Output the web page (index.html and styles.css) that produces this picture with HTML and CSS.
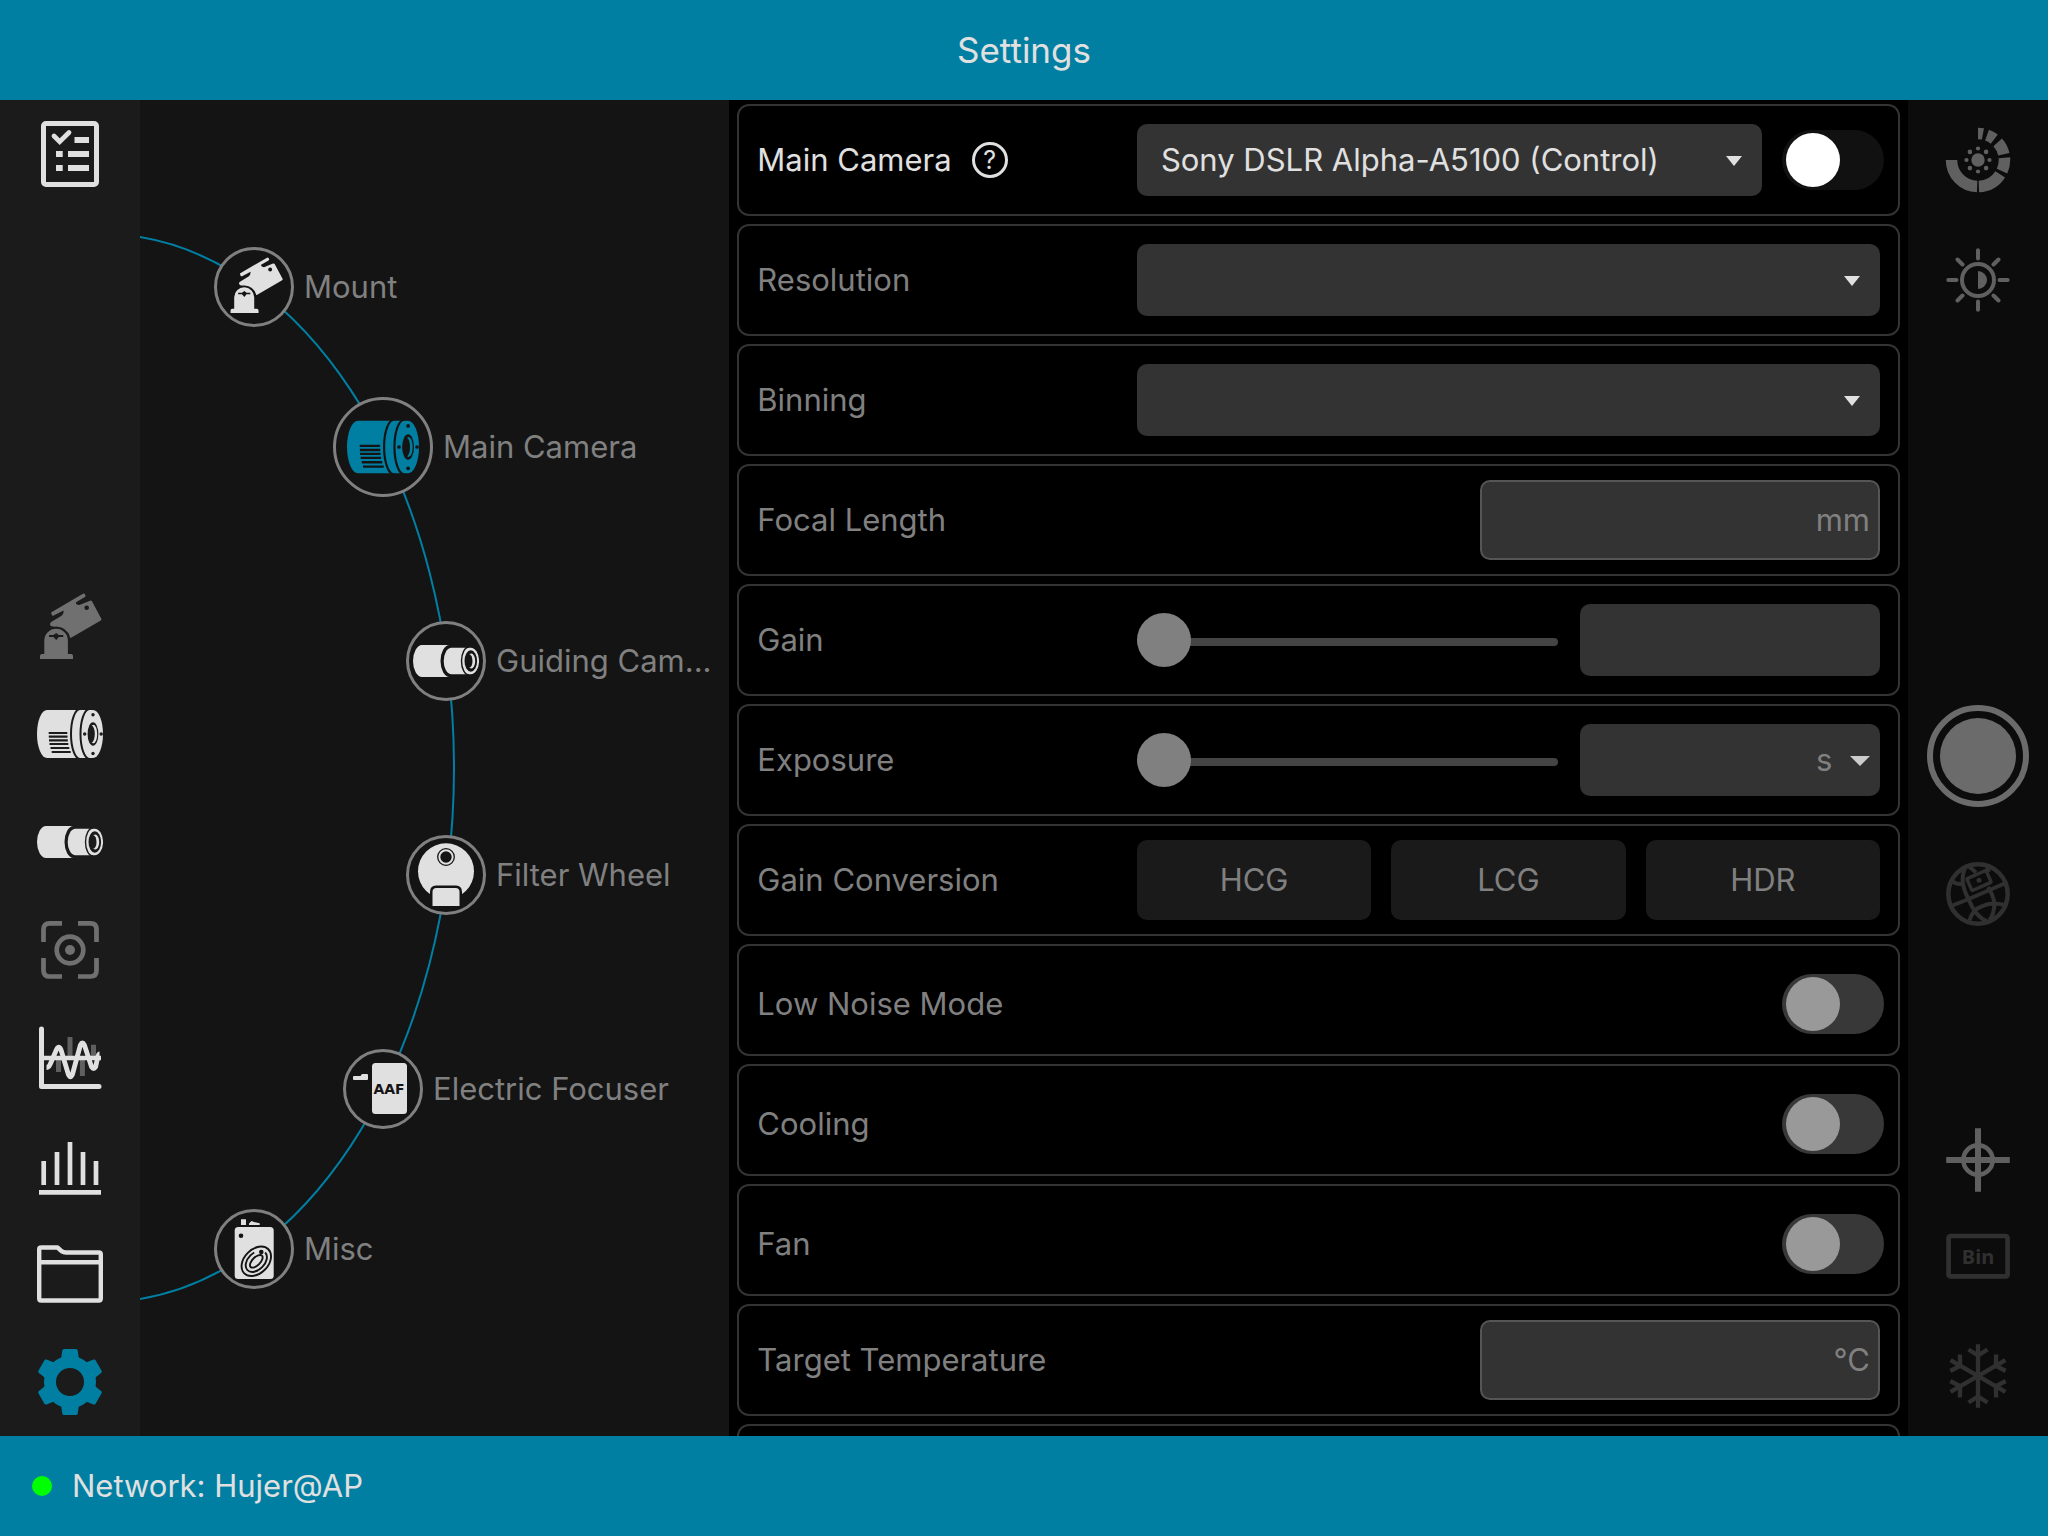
FILE: index.html
```html
<!DOCTYPE html>
<html lang="en">
<head>
  <meta charset="UTF-8">
  <meta name="viewport" content="width=device-width, initial-scale=1">
  <title>Settings</title>
  <link rel="stylesheet" href="styles.css">
</head>
<body>
  <!-- shared device icons -->
  <svg class="sprite" aria-hidden="true">
    <symbol id="i-mount" viewBox="0 0 66 66">
      <path fill="currentColor" d="M14 19.5 46 .8q1.2-.8 1.8.3l.6 1.4q.4 1-.6 1.5L39 9.2q-.6 2.6 3.4 2.8L53 7.7q1.4-.5 2 .6l9.3 17.4q.5 1-.5 1.7L34.5 44.6q-1.2.8-1.4-.4Q30 34.2 19.5 33.6 13.5 34 13 31.4q-.2-1.6 1.6-2.6l9.6-5.8q2.6-1.8 2.4-5.6l-10 5.2q-1.2.6-1.8-.6z"/>
      <circle class="cut" cx="49.7" cy="14.7" r="2.3"/>
      <path fill="currentColor" d="M3 66v-3q0-2 2-2h2.3V47.5a11.8 11.8 0 0 1 23.6 0V61H34q2 0 2 2v3z"/>
      <path class="cut" d="M12 42h4.5l2.7-2 2.7 2h4.4v2h-4.4l-2.7 3-2.7-3H12z"/>
    </symbol>
    <symbol id="i-camera" viewBox="0 0 66 66">
      <path fill="currentColor" d="M10 9H56A10 24 0 0 1 56 57H10A10 24 0 0 1 10 9Z"/>
      <path class="cut-line" stroke-width="2" d="M43 8A9 25 0 0 0 43 58M52.5 8A9 25 0 0 0 52.5 58"/>
      <path class="cut-line" stroke-width="2.2" d="M11.7 32H30.3M11.8 35.7H30.5M12 39.3H30.8M12.5 43H31.3M13.5 47H32.3M14.7 51H33.7"/>
      <g class="cut">
        <circle cx="56" cy="13.7" r="1.7"/>
        <circle cx="56" cy="52.5" r="1.7"/>
        <circle cx="47.7" cy="33" r="1.7"/>
        <circle cx="64.2" cy="33" r="1.7"/>
        <ellipse cx="56" cy="33" rx="5.4" ry="11.8"/>
      </g>
      <ellipse fill="currentColor" cx="56.4" cy="33" rx="3.8" ry="9.2"/>
      <ellipse class="cut" cx="54.4" cy="33" rx="3.4" ry="8.6"/>
    </symbol>
    <symbol id="i-guide" viewBox="0 0 66 66">
      <path fill="currentColor" d="M9 17H36.5A9 16 0 0 0 36.5 49H9A9 16 0 0 1 9 17Z"/>
      <path fill="currentColor" d="M38 19.7H57.7A8.3 13.2 0 0 1 57.7 46.2H38A8 13.3 0 0 1 38 19.7Z"/>
      <path class="cut-line" stroke-width="1.4" d="M56 19A7.5 14 0 0 0 56 47"/>
      <ellipse class="cut" cx="57.8" cy="33" rx="6.3" ry="10.7"/>
      <ellipse fill="currentColor" cx="58.2" cy="33" rx="4" ry="7.4"/>
      <ellipse class="cut" cx="56.2" cy="33" rx="3.3" ry="6.8"/>
    </symbol>
  </svg>

  <header class="topbar">
    <h1>Settings</h1>
  </header>

  <main class="layout">
    <nav class="sidebar" aria-label="Tools">
      <button class="tool tool-first" aria-label="Plan">
        <svg viewBox="0 0 66 66" fill="none" stroke="currentColor">
          <rect x="6.5" y="2.5" width="53" height="61" rx="2.5" stroke-width="5"/>
          <path d="M17 15l5.700 5.700L32 11.500" stroke-width="4.8" stroke-linecap="round"/>
          <path d="M37.5 19H52M31 33H52M31 47H52M19 33h6.700M19 47h6.700" stroke-width="6"/>
        </svg>
      </button>
      <button class="tool off" aria-label="Mount"><svg><use href="#i-mount"/></svg></button>
      <button class="tool" aria-label="Main Camera"><svg><use href="#i-camera"/></svg></button>
      <button class="tool" aria-label="Guiding Camera"><svg><use href="#i-guide"/></svg></button>
      <button class="tool off" aria-label="Focus">
        <svg viewBox="0 0 66 66" fill="none" stroke="currentColor" stroke-width="4.7">
          <path d="M25 6.4H12.5q-6 0-6 6V25M41 6.4H53.5q6 0 6 6V25M25 59.5H12.5q-6 0-6-6V41M41 59.5H53.5q6 0 6-6V41"/>
          <circle cx="33" cy="33" r="13.3"/>
          <circle cx="33" cy="33" r="5" fill="currentColor" stroke="none"/>
        </svg>
      </button>
      <button class="tool" aria-label="Guiding">
        <svg viewBox="0 0 66 66" fill="none" stroke="currentColor">
          <path stroke="#5f5f5f" stroke-width="5" d="M21.5 33V47M33 12V33M45.4 33V51M56.5 19.7V33"/>
          <path d="M4.5 4V61.500H62" stroke-width="5" stroke-linecap="round" stroke-linejoin="round"/>
          <path d="M7 33H64" stroke-width="4.5"/>
          <path d="M9.500 42.500q2.500 0 4-4l6-14q2.200-4.500 4.400 0l7.500 25q2 4.500 4 0l8-29.500q2-4 4 0l7.200 22q2 3 4 0l1.500-7q1-6 2.400-6" stroke-width="4.8" stroke-linejoin="round"/>
        </svg>
      </button>
      <button class="tool" aria-label="Histogram">
        <svg viewBox="0 0 66 66" fill="none" stroke="currentColor" stroke-width="4.7">
          <path d="M6.7 28V52M20 19V52M33 9V52M46 19V52M59 28V52M2 59.3H64"/>
        </svg>
      </button>
      <button class="tool" aria-label="Files">
        <svg viewBox="0 0 66 66" fill="none" stroke="currentColor" stroke-width="4.4" stroke-linejoin="round">
          <path d="M4 6.5H20.5l4 3.600q2 1.400 4.500 1.400H61.800q2 0 2 2V57.500q0 2-2 2H4.200q-2 0-2-2V8.500q0-2 2-2zM2 21.300H64"/>
        </svg>
      </button>
      <button class="tool active" aria-label="Settings">
        <svg viewBox="0 0 66 66" fill="currentColor">
          <circle cx="33" cy="33" r="20" fill="none" stroke="currentColor" stroke-width="12"/>
          <g id="tooth"><path d="M27 0H39q1.500 0 1.700 1.500L42 10H24L25.300 1.500Q25.500 0 27 0Z"/></g>
          <use href="#tooth" transform="rotate(60 33 33)"/>
          <use href="#tooth" transform="rotate(120 33 33)"/>
          <use href="#tooth" transform="rotate(180 33 33)"/>
          <use href="#tooth" transform="rotate(240 33 33)"/>
          <use href="#tooth" transform="rotate(300 33 33)"/>
        </svg>
      </button>
    </nav>

    <section class="devices" aria-label="Devices">
      <div class="wheel">
        <svg class="arc" viewBox="0 0 589 1336" fill="none">
          <ellipse cx="-38" cy="668" rx="352" ry="534"/>
        </svg>
        <a href="#" class="node n-mount"><span class="disc"><svg class="small"><use href="#i-mount"/></svg></span><span class="name">Mount</span></a>
        <a href="#" class="node n-camera"><span class="disc big"><svg><use href="#i-camera"/></svg></span><span class="name">Main Camera</span></a>
        <a href="#" class="node n-guide"><span class="disc"><svg><use href="#i-guide"/></svg></span><span class="name">Guiding Cam...</span></a>
        <a href="#" class="node n-filter">
          <span class="disc">
            <svg viewBox="0 0 66 66">
              <circle cx="33" cy="29.3" r="28" fill="currentColor"/>
              <circle class="cut-line" cx="33" cy="15" r="8.3" stroke-width="1.3"/>
              <circle class="cut" cx="33" cy="15" r="5.7"/>
              <path class="cut" d="M17 66V50q0-6.500 6-6.500H43q6 0 6 6.500v16z"/>
              <path fill="currentColor" d="M19.5 64V50q0-4 4-4h19q4 0 4 4v14z"/>
            </svg>
          </span>
          <span class="name">Filter Wheel</span>
        </a>
        <a href="#" class="node n-focuser">
          <span class="disc">
            <svg viewBox="0 0 66 66" fill="currentColor">
              <path d="M3 21q0-1 1-1h6.500l1-1.500q.3-.5 1-.5H17q1 0 1 1v4q0 1-1 1H4q-1 0-1-1z"/>
              <rect x="22" y="7" width="35" height="51" rx="3.5"/>
              <text class="cut aaf" x="39" y="38" text-anchor="middle">AAF</text>
            </svg>
          </span>
          <span class="name">Electric Focuser</span>
        </a>
        <a href="#" class="node n-misc">
          <span class="disc">
            <svg viewBox="0 0 66 66" fill="currentColor">
              <path d="M20 3.300h5V9h-5zM28 9V7.500L30.500 5l2.500 1 5.700 1.300V9z"/>
              <rect x="13.7" y="11" width="39" height="52" rx="3.5"/>
              <circle class="cut" cx="20" cy="19.7" r="2.3"/>
              <g class="cut-line" stroke-width="1.9" transform="rotate(-45 35.3 45.3)">
                <ellipse cx="35.3" cy="45.3" rx="17" ry="12"/>
                <ellipse cx="35.3" cy="45.3" rx="12.5" ry="8.3" stroke-dasharray="54 12"/>
                <ellipse cx="35.3" cy="45.3" rx="8" ry="4"/>
              </g>
              <circle class="cut" cx="40.3" cy="36" r="2.3"/>
            </svg>
          </span>
          <span class="name">Misc</span>
        </a>
      </div>
    </section>

    <form class="panel">
      <div class="row on">
        <div class="label">
          <label for="camera">Main Camera</label>
          <button type="button" class="help" aria-label="Help">?</button>
        </div>
        <div class="control">
          <div class="dropdown">
            <select id="camera"><option>Sony DSLR Alpha-A5100 (Control)</option></select>
          </div>
          <input type="checkbox" class="toggle" aria-label="Connect main camera">
        </div>
      </div>
      <div class="row">
        <div class="label"><label for="resolution">Resolution</label></div>
        <div class="control"><div class="dropdown"><select id="resolution" disabled></select></div></div>
      </div>
      <div class="row">
        <div class="label"><label for="binning">Binning</label></div>
        <div class="control"><div class="dropdown"><select id="binning" disabled></select></div></div>
      </div>
      <div class="row">
        <div class="label"><label for="focal">Focal Length</label></div>
        <div class="control"><div class="field outlined"><input type="text" id="focal" disabled><span>mm</span></div></div>
      </div>
      <div class="row">
        <div class="label"><label for="gain">Gain</label></div>
        <div class="control">
          <input type="range" id="gain" value="0" disabled>
          <div class="field"><input type="text" aria-label="Gain value" disabled></div>
        </div>
      </div>
      <div class="row">
        <div class="label"><label for="exposure">Exposure</label></div>
        <div class="control">
          <input type="range" id="exposure" value="0" disabled>
          <div class="field">
            <input type="text" aria-label="Exposure value" disabled>
            <div class="dropdown unit"><select aria-label="Exposure unit" disabled><option>s</option></select></div>
          </div>
        </div>
      </div>
      <div class="row">
        <div class="label">Gain Conversion</div>
        <div class="control">
          <button type="button" class="mode" disabled>HCG</button>
          <button type="button" class="mode" disabled>LCG</button>
          <button type="button" class="mode" disabled>HDR</button>
        </div>
      </div>
      <div class="row switch">
        <div class="label"><label for="lownoise">Low Noise Mode</label></div>
        <div class="control"><input type="checkbox" class="toggle" id="lownoise" disabled></div>
      </div>
      <div class="row switch">
        <div class="label"><label for="cooling">Cooling</label></div>
        <div class="control"><input type="checkbox" class="toggle" id="cooling" disabled></div>
      </div>
      <div class="row switch">
        <div class="label"><label for="fan">Fan</label></div>
        <div class="control"><input type="checkbox" class="toggle" id="fan" disabled></div>
      </div>
      <div class="row">
        <div class="label"><label for="temp">Target Temperature</label></div>
        <div class="control"><div class="field outlined"><input type="text" id="temp" disabled><span>°C</span></div></div>
      </div>
      <div class="row"></div>
    </form>

    <aside class="rail">
      <button class="action" aria-label="Aperture">
        <svg viewBox="0 0 66 66" fill="currentColor">
          <circle cx="33" cy="33" r="26.5" fill="none" stroke="currentColor" stroke-width="11.5" pathLength="360" stroke-dasharray="11 9 18 10 29 8 30 8 55 4 88 90" transform="rotate(-90 33 33)"/>
          <circle cx="33" cy="33" r="6.7"/>
          <circle cx="33" cy="21.5" r="2.1"/><circle cx="33" cy="44.5" r="2.1"/>
          <circle cx="21.5" cy="33" r="2.1"/><circle cx="44.5" cy="33" r="2.1"/>
          <circle cx="24.9" cy="24.9" r="2.3"/><circle cx="41.1" cy="24.9" r="2.3"/>
          <circle cx="24.9" cy="41.1" r="2.3"/><circle cx="41.1" cy="41.1" r="2.3"/>
        </svg>
      </button>
      <button class="action" aria-label="Brightness">
        <svg viewBox="0 0 66 66" fill="none" stroke="currentColor" stroke-width="4" stroke-linecap="round">
          <circle cx="33" cy="33" r="16"/>
          <path d="M33 24a9 9 0 0 1 0 18z" fill="currentColor" stroke="none"/>
          <path d="M33 3.300V11.500M33 54.500V62.700M3.300 33H11.500M54.500 33H62.700M12.500 12.500l5 5M48.500 48.500l5 5M12.500 53.500l5-5M48.500 17.500l5-5"/>
        </svg>
      </button>
      <div class="capture">
        <button class="action shutter" aria-label="Capture">
          <svg viewBox="0 0 102 102">
            <circle cx="51" cy="51" r="48" fill="none" stroke="currentColor" stroke-width="6"/>
            <circle cx="51" cy="51" r="38" fill="currentColor"/>
          </svg>
        </button>
        <button class="action dim" aria-label="Sky map">
          <svg viewBox="0 0 66 66" fill="none" stroke="currentColor" stroke-width="4">
            <circle cx="33" cy="33" r="29.7" stroke-width="4.5"/>
            <path d="M7.500 44.500 25 37.500 59.500 22.500M20 7q-6 14 3.500 31 7 18 19 22.500M7 20q4 3.500 10 3M43 26q9 14 5.500 24-1.500 7-4.500 9M24.500 59.500q3-11 12-14 10-5 22.500-1.500M24 5.500l7 6M42 6l2 5"/>
            <rect x="23.5" y="13" width="21" height="13" rx="1" stroke-width="3.4" transform="rotate(-24 34 19.5)"/>
            <circle cx="34" cy="19.3" r="2.5" fill="currentColor" stroke="none"/>
          </svg>
        </button>
      </div>
      <button class="action short" aria-label="Crosshair">
        <svg viewBox="0 0 66 66" fill="none" stroke="currentColor">
          <circle cx="33" cy="33" r="14.7" stroke-width="4.5"/>
          <path d="M33 1.200V64.800M1.200 33H64.800" stroke-width="6"/>
        </svg>
      </button>
      <button class="action dim" aria-label="Binning">
        <svg viewBox="0 0 66 66">
          <rect x="3.6" y="13" width="59" height="40.4" rx="2" fill="none" stroke="currentColor" stroke-width="4.7"/>
          <text class="bin" x="33" y="41" text-anchor="middle" fill="currentColor">Bin</text>
        </svg>
      </button>
      <button class="action dim" aria-label="Cooling">
        <svg viewBox="0 0 66 66" fill="none" stroke="currentColor" stroke-width="4.3">
          <g id="flake"><path d="M33 1.300V64.700M23.500 6.500 33 12.500 42.500 6.500M23.500 59.500 33 53.500 42.500 59.500"/></g>
          <use href="#flake" transform="rotate(60 33 33)"/>
          <use href="#flake" transform="rotate(120 33 33)"/>
        </svg>
      </button>
    </aside>
  </main>

  <footer class="statusbar">
    <span class="dot"></span>
    <span>Network: Hujer@AP</span>
  </footer>
</body>
</html>
```

FILE: styles.css
```css
* {
  box-sizing: border-box;
}
body {
  --accent: #007fa3;
  --light: #e0e0e0;
  --muted: #808080;
  --box: #333;
  margin: 0;
  height: 100vh;
  display: flex;
  flex-direction: column;
  background: #000;
  color: var(--muted);
  font-family: Inter, "Liberation Sans", sans-serif;
  font-size: 31px;
  line-height: 40px;
}
button, input, select {
  font: inherit;
  color: inherit;
  margin: 0;
  padding: 0;
  border: none;
  background: none;
}
svg {
  display: block;
}
.sprite {
  position: absolute;
  width: 0;
  height: 0;
}
/* parts knocked out of an icon take the colour behind it */
.cut {
  fill: var(--bg);
}
.cut-line {
  fill: none;
  stroke: var(--bg);
}

.topbar, .statusbar {
  flex: none;
  height: 100px;
  display: flex;
  align-items: center;
  background: var(--accent);
  color: var(--light);
}
.topbar {
  justify-content: center;
}
.topbar h1 {
  margin: 0;
  font-size: 35px;
  font-weight: 400;
}
.statusbar {
  gap: 20px;
  padding: 0 32px;
}
.dot {
  width: 20px;
  height: 20px;
  border-radius: 50%;
  background: #0f0;
}

.layout {
  flex: 1;
  min-height: 0;
  display: grid;
  grid-template-columns: 140px 1fr 2fr 140px;
  grid-template-rows: 100%;
}

/* left tools */
.sidebar {
  --bg: #1b1b1b;
  display: flex;
  flex-direction: column;
  background: var(--bg);
}
.tool {
  height: 108px;
  display: flex;
  align-items: center;
  justify-content: center;
  color: var(--light);
}
.tool svg, .action svg {
  width: 66px;
  height: 66px;
}
.tool-first {
  margin-bottom: auto;
}
.tool.off {
  color: #707070;
}
.tool.active {
  color: var(--accent);
}

/* device wheel */
.devices {
  --bg: #141414;
  display: flex;
  align-items: center;
  overflow: hidden;
  background: var(--bg);
}
.wheel {
  position: relative;
  flex: 1;
  height: 1336px;
}
.arc {
  position: absolute;
  left: 0;
  top: 0;
  width: 589px;
  height: 1336px;
  stroke: var(--accent);
  stroke-width: 2;
}
.node {
  position: absolute;
  display: flex;
  align-items: center;
  gap: 10px;
  color: var(--muted);
  text-decoration: none;
  white-space: nowrap;
}
.disc {
  flex: none;
  width: 80px;
  height: 80px;
  display: flex;
  align-items: center;
  justify-content: center;
  border: 3px solid var(--muted);
  border-radius: 50%;
  background: var(--bg);
  color: var(--light);
}
.disc svg {
  flex: none;
  width: 66px;
  height: 66px;
}
.disc .small {
  width: 56px;
  height: 56px;
  margin: 0 0 4px 4px;
}
.disc.big {
  width: 100px;
  height: 100px;
  color: var(--accent);
}
.disc.big svg {
  width: 72px;
  height: 72px;
}
.n-mount { left: 74px; top: 147px; }
.n-camera { left: 193px; top: 297px; }
.n-guide { left: 266px; top: 521px; }
.n-filter { left: 266px; top: 735px; }
.n-focuser { left: 203px; top: 949px; }
.n-misc { left: 74px; top: 1109px; }
.aaf {
  font: 700 14px/1 "DejaVu Sans", sans-serif;
}
.bin {
  font: 700 20px/1 "Noto Sans", sans-serif;
}

/* settings rows */
.panel {
  display: flex;
  flex-direction: column;
  gap: 8px;
  padding: 4px 8px;
  overflow-y: auto;
  scrollbar-width: none;
}
.row {
  flex: none;
  height: 112px;
  display: grid;
  grid-template-columns: 1fr 2fr;
  column-gap: 8px;
  align-items: center;
  padding: 0 18px;
  border: 2px solid var(--box);
  border-radius: 12px;
}
.row.on {
  color: var(--light);
}
.row.switch {
  padding-top: 8px;
}
.label {
  display: flex;
  align-items: center;
  gap: 20px;
}
.help {
  width: 36px;
  height: 36px;
  border: 3px solid;
  border-radius: 50%;
  font-size: 25px;
  line-height: 30px;
}
.control {
  min-width: 0;
  display: flex;
  align-items: center;
  justify-content: flex-end;
  gap: 20px;
}
.dropdown {
  position: relative;
  flex: 1;
  height: 72px;
  border-radius: 10px;
  background: var(--box);
}
.dropdown select {
  appearance: none;
  width: 100%;
  height: 100%;
  padding: 0 50px 0 24px;
  opacity: 1;
}
.dropdown::after {
  content: "";
  position: absolute;
  right: 20px;
  top: 32px;
  border: 8px solid transparent;
  border-top: 10px solid var(--light);
  border-bottom: none;
  pointer-events: none;
}
.field {
  flex: none;
  width: 300px;
  height: 72px;
  display: flex;
  align-items: center;
  padding-right: 8px;
  border-radius: 10px;
  background: var(--box);
}
.field input {
  flex: 1;
  min-width: 0;
  height: 100%;
}
.field.outlined {
  width: 400px;
  height: 80px;
  border: 2px solid #555;
}
.unit {
  flex: none;
  width: 58px;
}
.unit select {
  padding: 0 32px 0 2px;
}
.unit::after {
  right: 2px;
  border-width: 10px 10px 0;
  border-top-color: #ccc;
}
.toggle {
  appearance: none;
  flex: none;
  width: 102px;
  height: 60px;
  margin-right: -4px;
  padding: 3px 4px;
  border-radius: 30px;
  background: #383838;
}
.toggle::before {
  content: "";
  display: block;
  width: 54px;
  height: 54px;
  border-radius: 50%;
  background: #999;
}
.row.on .toggle {
  background: #111;
}
.row.on .toggle::before {
  background: #fff;
}
.toggle:checked::before {
  margin-left: auto;
}
input[type="range"] {
  appearance: none;
  flex: 1;
  min-width: 0;
  height: 58px;
  padding: 4px 2px 0 0;
}
input[type="range"]::-webkit-slider-runnable-track {
  height: 8px;
  border-radius: 4px;
  background: #444;
}
input[type="range"]::-webkit-slider-thumb {
  appearance: none;
  width: 54px;
  height: 54px;
  margin-top: -25px;
  border-radius: 50%;
  background: var(--muted);
}
.mode {
  flex: 1;
  height: 80px;
  border-radius: 10px;
  background: #1a1a1a;
}

/* right rail */
.rail {
  display: flex;
  flex-direction: column;
  background: #0c0c0c;
  color: #606060;
}
.action {
  flex: none;
  height: 120px;
  display: flex;
  align-items: center;
  justify-content: center;
}
.action.short {
  height: 72px;
}
.action.dim {
  color: #303030;
}
.capture {
  flex: 1;
  display: flex;
  flex-direction: column;
  justify-content: center;
  gap: 18px;
  padding-top: 186px;
}
.action.shutter {
  color: #6b6b6b;
}
.shutter svg {
  width: 102px;
  height: 102px;
}
```
